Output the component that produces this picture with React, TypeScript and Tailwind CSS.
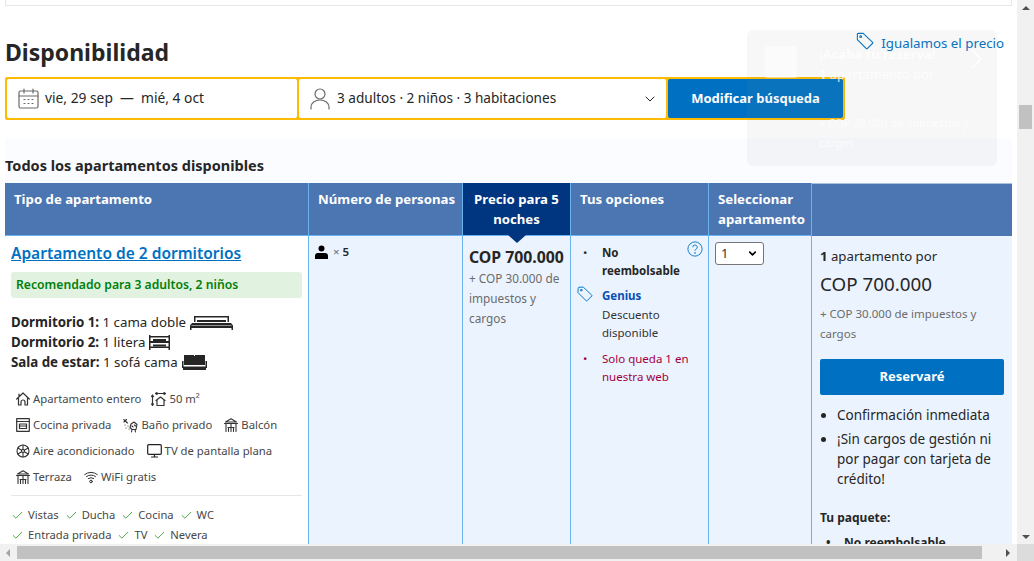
import React from "react";
import { Check, ChevronDown } from "lucide-react";

const S = ({ className = "", children, vb = "0 0 24 24", w = 1.2 }: any) => (
  <svg viewBox={vb} className={className} fill="none" stroke="currentColor" strokeWidth={w} strokeLinecap="round" strokeLinejoin="round">{children}</svg>
);

const Tag = ({ className = "" }: any) => (
  <S className={className} vb="0 0 20 20"><path d="M1.500 2.500 Q1.500 1.500 2.500 1.500 H8 L18.500 11.500 Q19 12 18.500 12.500 L12.500 18.500 Q12 19 11.500 18.500 L1.500 8.500 Z" /><circle cx="5.200" cy="5.200" r="1" /></S>
);
const Cal = () => (
  <S className="w-[21px] h-[21px] text-[#6b6b6b]" vb="0 0 21 21"><rect x="1" y="3" width="19" height="17" rx="1.500" /><path d="M1 8h19M6 1v4M15 1v4" /><path d="M6 11.500h1M10 11.500h1M14 11.500h1M6 15.500h1M10 15.500h1M14 15.500h1" /></S>
);
const Person = () => (
  <S className="w-[20px] h-[22px] text-[#6b6b6b]" vb="0 0 20 22"><circle cx="10" cy="6" r="5" /><path d="M1 21v-2a9 7 0 0 1 18 0v2" /></S>
);
const ic = "w-[14px] h-[14px] shrink-0 text-[#333]";
const Home = () => <S className={ic} vb="0 0 14 14"><path d="M.7 7 7 1l6.300 6M2.500 5.500V13h2.500v-3a2 2 0 0 1 4 0v3h2.500V5.500M3 2v2" /></S>;
const Size = () => <S className="w-[15px] h-[14px] shrink-0 text-[#333]" vb="0 0 15 14"><path d="M4.500 1.500h10M6 .5l-1.500 1 1.500 1M13 .5l1.500 1-1.500 1M1.500 3v10.500M.5 4.500l1-1.500 1 1.500M.5 12l1 1.500 1-1.500M5 8.500l4.500-3.500 4.500 3.500M6 8v5.500h7V8" /></S>;
const Kitchen = () => <S className={ic} vb="0 0 14 14"><rect x=".7" y=".7" width="12.600" height="12.600" /><path d="M.7 3.500h12.600M3.500 6h7v4.500h-7zM3.500 8h7" /></S>;
const Bath = () => <S className="w-[15px] h-[15px] shrink-0 text-[#333]" vb="0 0 15 15" w={1.100}><path d="M.7 1.500 4.500 5M1 4l2.500-2.500M2 7h.1M5 8h.1M3 10h.1M6 11h.1M8 6l3-2 3 2.500-1 5H9l-2-2zM9 8l1 1M11.500 7l1 1M9 11.500l-.5 2.500M12 11.500l.5 2.500" /></S>;
const Balcony = () => <S className={ic} vb="0 0 14 14" w={1.100}><path d="M1.500 4 7 .8 12.500 4zM.5 5.500h13M2 5.500v8M12 5.500v8M7 5.500v8M4 9.500h6M4.500 9.500v4M9.500 9.500v4" /></S>;
const Snow = () => <S className={ic} vb="0 0 14 14" w={1.100}><circle cx="7" cy="7" r="6" /><circle cx="7" cy="7" r="1.500" /><path d="M7 1v4.500M7 8.500V13M1.800 4l3.900 2.200M8.300 7.800l3.900 2.200M12.200 4 8.300 6.200M5.700 7.800 1.800 10" /></S>;
const Tv = () => <S className="w-[15px] h-[14px] shrink-0 text-[#222]" vb="0 0 15 14"><rect x=".7" y=".7" width="13.600" height="9.600" rx="1" /><path d="M7.500 10.500v2M4.500 13h6" /></S>;
const Wifi = () => <S className={ic} vb="0 0 14 14" w={1}><path d="M.7 4.500q6.300-4.500 12.600 0M2.500 6.500q4.500-3 9 0M4.300 8.500q2.700-1.800 5.400 0" /><circle cx="7" cy="11.500" r="1.300" /></S>;

const Am = ({ icon, children }: any) => (
  <span className="inline-flex items-center gap-[3px] text-[#474747]">{icon}<span>{children}</span></span>
);
const Ck = ({ children }: any) => (
  <span className="inline-flex items-center gap-[4px] text-[#474747]"><Check className="w-[13px] h-[13px] text-[#3f9f3f]" strokeWidth={1.700} /><span>{children}</span></span>
);

const Th = ({ className, children }: any) => (
  <div className={`px-[9px] pt-[6px] text-white font-bold leading-[20px] ${className}`}>{children}</div>
);

export default function App() {
  return (
    <div className="relative w-[1034px] h-[561px] overflow-hidden bg-white text-[13.500px] text-[#262626] flex flex-col" style={{ fontFamily: '"Noto Sans", "Open Sans", sans-serif' }}>
      <div className="flex flex-1 min-h-0">
        <div className="w-[1017px] min-w-0 overflow-hidden pl-[5px] pr-[5px]">
          <div className="h-[6px] border border-t-0 border-[#e6e6e6]"></div>
          <div className="relative">
            <h2 className="mt-[30px] h-[41px] text-[23px] leading-[32px] font-bold text-[#262626]">Disponibilidad</h2>
            <a className="absolute right-[8px] top-[-2px] inline-flex items-center gap-[7px] text-[#0071c2] text-[13.300px] leading-[18px]"><Tag className="w-[18px] h-[18px] -mt-[4px]" />Igualamos el precio</a>
          </div>
          <div className="flex w-[840px] h-[43px] bg-[#febb02] p-[2px] gap-[2px] rounded-[2px] text-[13.600px]">
            <div className="w-[290px] shrink-0 bg-white rounded-[2px] flex items-center pl-[11px] gap-[6px]">
              <Cal /><span className="text-[#262626] whitespace-pre text-[13.800px]">vie, 29 sep  —  mié, 4 oct</span>
            </div>
            <div className="w-[367px] shrink-0 bg-white rounded-[2px] flex items-center pl-[11px] pr-[8px] gap-[7px]">
              <Person /><span>3 adultos · 2 niños · 3 habitaciones</span>
              <ChevronDown className="ml-auto w-[16px] h-[16px] text-[#262626]" strokeWidth={1.500} />
            </div>
            <button className="flex-1 bg-[#0071c2] text-white font-bold rounded-[2px] text-[13px]">Modificar búsqueda</button>
          </div>
          <div className="h-[45px] mt-[18px] bg-[#fbfcff] pt-[18px] font-bold leading-[18px] text-[14.500px]">Todos los apartamentos disponibles</div>

          <div className="grid grid-cols-[304px_154px_108px_138px_103px_200px] grid-rows-[53px_1fr] h-[361px] text-[13.200px]">
            <Th className="bg-[#4c76b2] border-r border-[#6bb3f0] border-b">Tipo de apartamento</Th>
            <Th className="bg-[#4c76b2] border-r border-[#6bb3f0] border-b whitespace-nowrap px-[7px]">Número de personas</Th>
            <Th className="bg-[#003580] border-r border-[#6bb3f0] border-b relative text-center">
              Precio para 5 noches
              <span className="absolute left-1/2 -translate-x-1/2 top-full w-0 h-0 border-x-[9px] border-x-transparent border-t-[8px] border-t-[#003580] z-10"></span>
            </Th>
            <Th className="bg-[#4c76b2] border-r border-[#6bb3f0] border-b px-[7px]">Tus opciones</Th>
            <Th className="bg-[#4c76b2] border-r border-[#6bb3f0] border-b px-[7px]">Seleccionar apartamento</Th>
            <Th className="bg-[#4c76b2] border-t border-[#a9c2e0]"> </Th>

            <div className="border-r border-[#6bb3f0] px-[6px] bg-white min-h-0 overflow-hidden">
              <a className="block mt-[7px] text-[15.500px] leading-[20px] font-semibold text-[#0071c2] underline">Apartamento de 2 dormitorios</a>
              <div className="mt-[9px] h-[26px] bg-[#e1f2e1] rounded-[3px] px-[5px] flex items-center font-semibold text-[#008009] text-[12.200px]">Recomendado para 3 adultos, 2 niños</div>
              <div className="mt-[14px] text-[13.300px] leading-[20px]">
                <div className="flex items-center gap-[4px] h-[20px]"><span><b className="font-bold">Dormitorio 1:</b> 1 cama doble</span><svg viewBox="0 0 43 15" className="w-[43px] h-[15px]" fill="#262626"><path d="M4 1h35v6h-1.500V2.500h-32V7H4zM7 5h29v2H7zM2 8h39l2 2.500V15h-1.500v-2h-40v2H0v-4.500zM1.500 11h40v-.5H1.500z" /></svg></div>
                <div className="flex items-center gap-[4px] h-[20px]"><span><b className="font-bold">Dormitorio 2:</b> 1 litera</span><svg viewBox="0 0 21 15" className="w-[21px] h-[15px]" fill="#262626"><path d="M0 0h1.500v1h18V0H21v15h-1.500v-2h-18v2H0zM1.500 2.500V6h18V2.500zM1.500 8v3.500h18V8z" /><path d="M4 4h13v2H4zM4 9.500h13v2H4z" /></svg></div>
                <div className="flex items-center gap-[4px] h-[20px]"><span><b className="font-bold">Sala de estar:</b> 1 sofá cama</span><svg viewBox="0 0 25 15" className="w-[25px] h-[15px]" fill="#262626"><path d="M2 0h10v1h1V0h10v10H2zM0 6h1.500v5.500h22V6H25v7h-1v2H1v-2H0z" /><path d="M4 2h7v6H4zM14 2h7v6h-7z" fill="#262626" /></svg></div>
              </div>
              <div className="mt-[19px] pl-[5px] text-[11.300px] leading-[16px] flex flex-col gap-[10px] h-[94px]">
                <div className="flex gap-[10px] h-[16px]"><Am icon={<Home />}>Apartamento entero</Am><Am icon={<Size />}>50 m²</Am></div>
                <div className="flex gap-[12px] h-[16px]"><Am icon={<Kitchen />}>Cocina privada</Am><Am icon={<Bath />}>Baño privado</Am><Am icon={<Balcony />}>Balcón</Am></div>
                <div className="flex gap-[12px] h-[16px]"><Am icon={<Snow />}>Aire acondicionado</Am><Am icon={<Tv />}>TV de pantalla plana</Am></div>
                <div className="flex gap-[12px] h-[16px]"><Am icon={<Balcony />}>Terraza</Am><Am icon={<Wifi />}>WiFi gratis</Am></div>
              </div>
              <div className="border-t border-[#e6e6e6] mt-[10px] pt-[9px] text-[11.200px] leading-[20px]">
                <div className="flex gap-[6px]"><Ck>Vistas</Ck><Ck>Ducha</Ck><Ck>Cocina</Ck><Ck>WC</Ck></div>
                <div className="flex gap-[6px]"><Ck>Entrada privada</Ck><Ck>TV</Ck><Ck>Nevera</Ck></div>
              </div>
            </div>

            <div className="border-r border-[#6bb3f0] bg-[#ebf3ff] pl-[6px] pt-[8px] flex items-start gap-[5px] h-full">
              <svg viewBox="0 0 13 14" className="w-[13px] h-[14px] mt-[1px]" fill="#000"><circle cx="6.500" cy="3.500" r="3" /><path d="M0 14v-3q0-3 3-3h7q3 0 3 3v3z" /></svg>
              <span className="text-[11.500px] leading-[16px] font-semibold"><span className="text-[#6b6b6b] font-normal">×</span> 5</span>
            </div>

            <div className="border-r border-[#6bb3f0] bg-[#ebf3ff] pl-[6px] pr-[4px] pt-[10px]">
              <div className="font-bold text-[15.800px] leading-[22px] whitespace-nowrap">COP 700.000</div>
              <div className="text-[#6b6b6b] text-[11.800px] leading-[20px]">+ COP 30.000 de impuestos y cargos</div>
            </div>

            <div className="border-r border-[#6bb3f0] bg-[#ebf3ff] relative pt-[8px] text-[11.500px] leading-[18px]">
              <div className="flex pl-[12px] pr-[8px]"><span className="w-[19px] shrink-0">•</span><b className="font-bold">No<br />reembolsable</b></div>
              <svg viewBox="0 0 18 18" className="absolute right-[5px] top-[5px] w-[16px] h-[16px] text-[#0071c2]" fill="none" stroke="currentColor" strokeWidth="1"><circle cx="9" cy="9" r="8" /><path d="M6.500 7a2.500 2.500 0 1 1 3.500 2.300q-1 .5-1 1.700" /><circle cx="9" cy="13.500" r=".5" /></svg>
              <div className="flex mt-[7px] pl-[6px]">
                <Tag className="w-[16px] h-[16px] text-[#0071c2] mt-[-1px] mr-[9px] shrink-0" />
                <div>
                  <div className="font-bold text-[#0a4fb5]">Genius</div>
                  <div className="text-[#333] mt-[1px]">Descuento<br />disponible</div>
                </div>
              </div>
              <div className="flex mt-[8px] pl-[12px] pr-[6px] text-[#a3003d]"><span className="w-[19px] shrink-0">•</span><span>Solo queda 1 en nuestra web</span></div>
            </div>

            <div className="border-r border-[#6bb3f0] bg-[#ebf3ff] pl-[6px] pt-[6px]">
              <div className="w-[49px] h-[23px] bg-white border border-[#767676] rounded-[3px] flex items-center justify-between px-[5px] text-[13px] text-[#333]"><span>1</span><ChevronDown className="w-[11px] h-[11px] text-black" strokeWidth={3.500} /></div>
            </div>

            <div className="bg-[#ebf3ff] px-[8px] pt-[10px] text-[13.500px]">
              <div className="leading-[20px] text-[13.200px]"><b className="font-bold">1</b> apartamento por</div>
              <div className="mt-[6px] text-[18.800px] leading-[24px] text-[#262626]">COP 700.000</div>
              <div className="mt-[8px] text-[11.500px] leading-[20px] text-[#6b6b6b]">+ COP 30.000 de impuestos y cargos</div>
              <button className="mt-[15px] w-[184px] h-[36px] bg-[#0071c2] rounded-[2px] text-white font-bold text-[13px]">Reservaré</button>
              <ul className="mt-[10px] list-disc pl-[17px] leading-[20px]">
                <li>Confirmación inmediata</li>
                <li className="mt-[4px]">¡Sin cargos de gestión ni por pagar con tarjeta de crédito!</li>
              </ul>
              <div className="mt-[20px] font-bold text-[12px] leading-[18px]">Tu paquete:</div>
              <div className="mt-[8px] flex text-[12px] leading-[16px] font-bold pl-[6px]"><span className="w-[18px]">•</span>No reembolsable</div>
            </div>
          </div>
        </div>
        {/* vertical scrollbar */}
        <div className="w-[17px] bg-[#f1f1f1] flex flex-col items-center relative">
          <span className="mt-[6px] w-0 h-0 border-x-[4px] border-x-transparent border-b-[4px] border-b-[#505050]"></span>
          <span className="mt-[95px] w-[13px] h-[24px] bg-[#c1c1c1]"></span>
          <span className="mt-auto mb-[5px] w-0 h-0 border-x-[4px] border-x-transparent border-t-[4px] border-t-[#505050]"></span>
        </div>
      </div>
      {/* horizontal scrollbar */}
      <div className="h-[17px] flex shrink-0">
        <div className="w-[1017px] bg-[#f1f1f1] flex items-center pl-[6px]">
          <span className="w-0 h-0 border-y-[4px] border-y-transparent border-r-[4px] border-r-[#a3a3a3]"></span>
          <span className="ml-[7px] w-[965px] h-[13px] bg-[#c1c1c1]"></span>
          <span className="ml-[24px] w-0 h-0 border-y-[4px] border-y-transparent border-l-[4px] border-l-[#505050]"></span>
        </div>
        <div className="w-[17px] bg-[#dcdcdc]"></div>
      </div>

      {/* faded floating card */}
      <div className="absolute left-[747px] top-[30px] w-[250px] h-[136px] rounded-[6px] bg-[#8c8c8c]/[0.07] text-white pointer-events-none overflow-hidden">
        <div className="absolute left-[18px] top-[16px] w-[32px] h-[32px] rounded-[2px] bg-white/50"></div>
        <div className="absolute left-[72px] top-[14px] font-bold text-[13px] leading-[20px] opacity-80">¡Acaba tu reserva!</div>
        <div className="absolute left-[72px] top-[34px] w-[130px] text-[13px] leading-[20px] opacity-80"><b>1</b> apartamento por</div>
        <div className="absolute left-[72px] top-[83px] w-[160px] text-[11px] leading-[20px] opacity-80">+ COP 30.000 de impuestos y cargos</div>
        <svg viewBox="0 0 12 20" className="absolute right-[14px] top-[19px] w-[12px] h-[20px]" fill="none" stroke="white" strokeWidth="1.500"><path d="m1 1 9 9-9 9" /></svg>
      </div>
    </div>
  );
}
